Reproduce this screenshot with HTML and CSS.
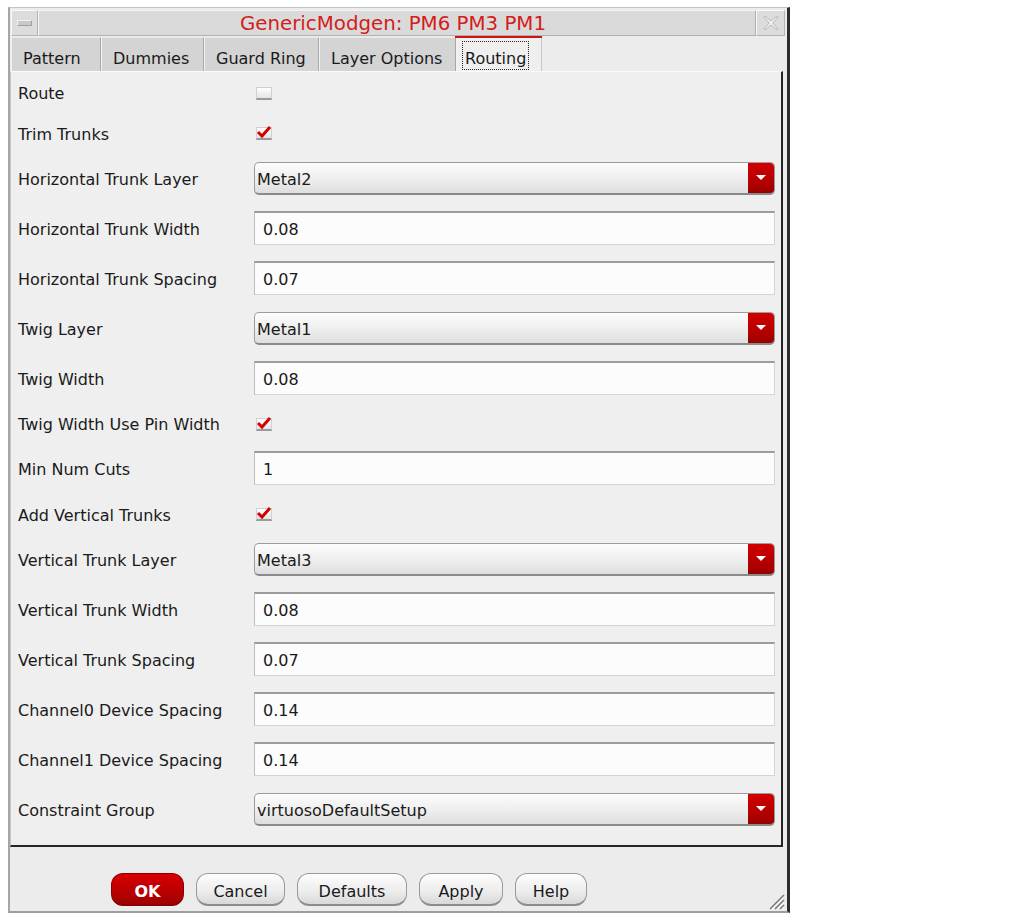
FILE: index.html
```html
<!DOCTYPE html>
<html>
<head>
<meta charset="utf-8">
<link rel="stylesheet" href="styles.css">
</head>
<body>
<div class="window">
  <div class="titlebar">
    <div class="tb-btn"><span class="min-bar"></span></div>
    <div class="title">GenericModgen: PM6 PM3 PM1</div>
    <div class="tb-btn close">
      <svg width="20" height="20" viewBox="0 0 20 20"><path d="M4 3 L10 8 L16 3 L17 4 L12 10 L17 16 L16 17 L10 12 L4 17 L3 16 L8 10 L3 4 Z" fill="#eeeeee" stroke="#b8b8b8" stroke-width="1"/></svg>
    </div>
  </div>
  <div class="tabs">
    <div class="tab t1">Pattern</div>
    <div class="tab t2">Dummies</div>
    <div class="tab t3">Guard Ring</div>
    <div class="tab t4">Layer Options</div>
    <div class="tab t5 active"><span class="focus">Routing</span></div>
  </div>
  <div class="panel">
    <div class="form">
      <div class="row r40"><div class="label">Route</div><div class="field"><span class="cb"></span></div></div>
      <div class="row r41"><div class="label">Trim Trunks</div><div class="field"><span class="cb checked"><svg width="16" height="14" viewBox="0 0 16 14"><path d="M2 7 L6 11 L14 2" fill="none" stroke="#d40000" stroke-width="3"/></svg></span></div></div>
      <div class="row r50"><div class="label">Horizontal Trunk Layer</div><div class="field"><div class="combo"><span class="cval">Metal2</span><span class="arrow"></span></div></div></div>
      <div class="row r50"><div class="label">Horizontal Trunk Width</div><div class="field"><div class="input">0.08</div></div></div>
      <div class="row r50"><div class="label">Horizontal Trunk Spacing</div><div class="field"><div class="input">0.07</div></div></div>
      <div class="row r50"><div class="label">Twig Layer</div><div class="field"><div class="combo"><span class="cval">Metal1</span><span class="arrow"></span></div></div></div>
      <div class="row r50"><div class="label">Twig Width</div><div class="field"><div class="input">0.08</div></div></div>
      <div class="row r40"><div class="label">Twig Width Use Pin Width</div><div class="field"><span class="cb checked"><svg width="16" height="14" viewBox="0 0 16 14"><path d="M2 7 L6 11 L14 2" fill="none" stroke="#d40000" stroke-width="3"/></svg></span></div></div>
      <div class="row r50"><div class="label">Min Num Cuts</div><div class="field"><div class="input">1</div></div></div>
      <div class="row r41"><div class="label">Add Vertical Trunks</div><div class="field"><span class="cb checked"><svg width="16" height="14" viewBox="0 0 16 14"><path d="M2 7 L6 11 L14 2" fill="none" stroke="#d40000" stroke-width="3"/></svg></span></div></div>
      <div class="row r50"><div class="label">Vertical Trunk Layer</div><div class="field"><div class="combo"><span class="cval">Metal3</span><span class="arrow"></span></div></div></div>
      <div class="row r50"><div class="label">Vertical Trunk Width</div><div class="field"><div class="input">0.08</div></div></div>
      <div class="row r50"><div class="label">Vertical Trunk Spacing</div><div class="field"><div class="input">0.07</div></div></div>
      <div class="row r50"><div class="label">Channel0 Device Spacing</div><div class="field"><div class="input">0.14</div></div></div>
      <div class="row r50"><div class="label">Channel1 Device Spacing</div><div class="field"><div class="input">0.14</div></div></div>
      <div class="row r50"><div class="label">Constraint Group</div><div class="field"><div class="combo"><span class="cval">virtuosoDefaultSetup</span><span class="arrow"></span></div></div></div>
    </div>
  </div>
  <div class="buttons">
    <div class="btn ok">OK</div>
    <div class="btn b-cancel">Cancel</div>
    <div class="btn b-defaults">Defaults</div>
    <div class="btn b-apply">Apply</div>
    <div class="btn b-help">Help</div>
    <svg class="grip" width="18" height="18" viewBox="0 0 18 18">
      <path d="M17 3 L3 17 M17 8 L8 17 M17 13 L13 17" stroke="#7a7a7a" stroke-width="1.5"/>
      <path d="M17 5 L5 17 M17 10 L10 17 M17 15 L15 17" stroke="#ffffff" stroke-width="1"/>
    </svg>
  </div>
</div>
</body>
</html>
```

FILE: styles.css
```css
html, body {
  margin: 0;
  padding: 0;
  background: #ffffff;
}
body {
  font-family: "DejaVu Sans", "Liberation Sans", sans-serif;
  font-size: 16px;
  color: #1a1a1a;
}
.window {
  margin: 7px 0 0 8px;
  width: 782px;
  box-sizing: border-box;
  border-top: 1px solid #c4c4c4;
  border-left: 2px solid #a6a6a6;
  border-right: 3px solid #2e2e2e;
  border-bottom: 2px solid #9e9e9e;
  background: #ececec;
  display: flex;
  flex-direction: column;
}
.titlebar {
  height: 29px;
  box-sizing: border-box;
  padding: 2px 2px 1px 1px;
  display: flex;
  align-items: stretch;
  background: #ececec;
}
.tb-btn {
  width: 27px;
  box-sizing: border-box;
  border: 1px solid #b4b4b4;
  border-top-color: #f8f8f8;
  border-left-color: #f8f8f8;
  background: #dcdcdc;
  display: flex;
  align-items: center;
  justify-content: center;
}
.close {
  width: 29px;
}
.min-bar {
  width: 13px;
  height: 4px;
  background: #c8c8c8;
  border: 1px solid #a0a0a0;
  border-top-color: #f0f0f0;
  border-left-color: #f0f0f0;
}
.title {
  flex: 1;
  background: #dadada;
  border: 1px solid #b0b0b0;
  border-top-color: #f4f4f4;
  border-left-color: #f4f4f4;
  color: #d41c1c;
  font-size: 19.8px;
  text-align: center;
  line-height: 25px;
  padding-right: 8px;
}
.tabs {
  height: 34px;
  display: flex;
  padding-left: 1px;
  background: #ececec;
}
.tab {
  box-sizing: border-box;
  background: #d4d4d4;
  border-left: 1px solid #f2f2f2;
  border-right: 1px solid #a8a8a8;
  border-top: 1px solid #e8e8e8;
  padding-left: 11px;
  line-height: 42px;
  white-space: nowrap;
  overflow: hidden;
}
.t1 { width: 90px; }
.t2 { width: 103px; }
.t3 { width: 115px; }
.t4 { width: 137px; }
.t5 { width: 86px; }
.tab.active {
  position: relative;
  overflow: visible;
  background: #efefef;
  border-right: 1px solid #c8c8c8;
  padding: 3px 0 0 5px;
  line-height: normal;
}
.tab.active::before {
  content: "";
  position: absolute;
  left: -2px;
  right: -1px;
  top: -2px;
  height: 2px;
  background: #d01414;
}
.focus {
  display: inline-block;
  border: 1px dotted #222;
  padding: 7px 2px 0 2px;
  line-height: 20px;
}
.panel {
  height: 776px;
  width: 773px;
  box-sizing: border-box;
  background: #efefef;
  border-top: 1px solid #fafafa;
  border-left: 1px solid #c8c8c8;
  border-right: 2px solid #262626;
  border-bottom: 2px solid #262626;
  padding: 0 6px 0 7px;
}
.form {
  display: flex;
  flex-direction: column;
}
.row {
  display: grid;
  grid-template-columns: 236px 1fr;
  align-items: center;
}
.r40 { height: 40px; }
.r41 { height: 41px; }
.r50 { height: 50px; }
.label {
  white-space: nowrap;
  padding-top: 3px;
}
.field {
  display: flex;
  align-items: center;
}
.cb {
  margin-left: 2px;
  width: 16px;
  height: 13px;
  box-sizing: border-box;
  background: linear-gradient(#ffffff, #e4e4e4);
  border: 1px solid #d0d0d0;
  border-bottom: 2px solid #9a9a9a;
  position: relative;
  margin-top: 2px;
}
.cb.checked svg {
  position: absolute;
  left: -1px;
  top: -3px;
}
.input {
  width: 521px;
  height: 34px;
  box-sizing: border-box;
  background: #fcfcfc;
  border: 1px solid #d4d4d4;
  border-top: 2px solid #9c9c9c;
  border-left: 1px solid #bcbcbc;
  padding: 2px 0 0 8px;
  line-height: 30px;
}
.combo {
  width: 521px;
  height: 33px;
  box-sizing: border-box;
  border: 1px solid #9c9c9c;
  border-bottom: 2px solid #8a8a8a;
  border-radius: 5px;
  background: linear-gradient(#fdfdfd, #ececec 60%, #dedede);
  display: flex;
  align-items: center;
  overflow: hidden;
}
.cval {
  flex: 1;
  padding: 3px 0 0 2px;
}
.arrow {
  width: 26px;
  height: 100%;
  background: linear-gradient(#d20000, #b00000 70%, #980000);
  position: relative;
}
.arrow::after {
  content: "";
  position: absolute;
  left: 8px;
  top: 12px;
  border-left: 5px solid transparent;
  border-right: 5px solid transparent;
  border-top: 5px solid #ffffff;
}
.buttons {
  height: 64px;
  box-sizing: border-box;
  padding: 26px 0 0 101px;
  display: flex;
  align-items: flex-start;
  gap: 12px;
  position: relative;
}
.btn {
  height: 33px;
  box-sizing: border-box;
  border: 1px solid #9a9a9a;
  border-bottom: 2px solid #8c8c8c;
  border-radius: 12px;
  background: linear-gradient(#fdfdfd, #ececec 60%, #d8d8d8);
  text-align: center;
  line-height: 36px;
}
.ok {
  width: 73px;
  background: linear-gradient(#d80000, #b80000 60%, #a00000);
  border-color: #8a0000;
  color: #ffffff;
  font-weight: bold;
}
.b-cancel { width: 89px; }
.b-defaults { width: 110px; }
.b-apply { width: 84px; }
.b-help { width: 72px; }
.grip {
  position: absolute;
  right: 2px;
  bottom: 1px;
}
```
